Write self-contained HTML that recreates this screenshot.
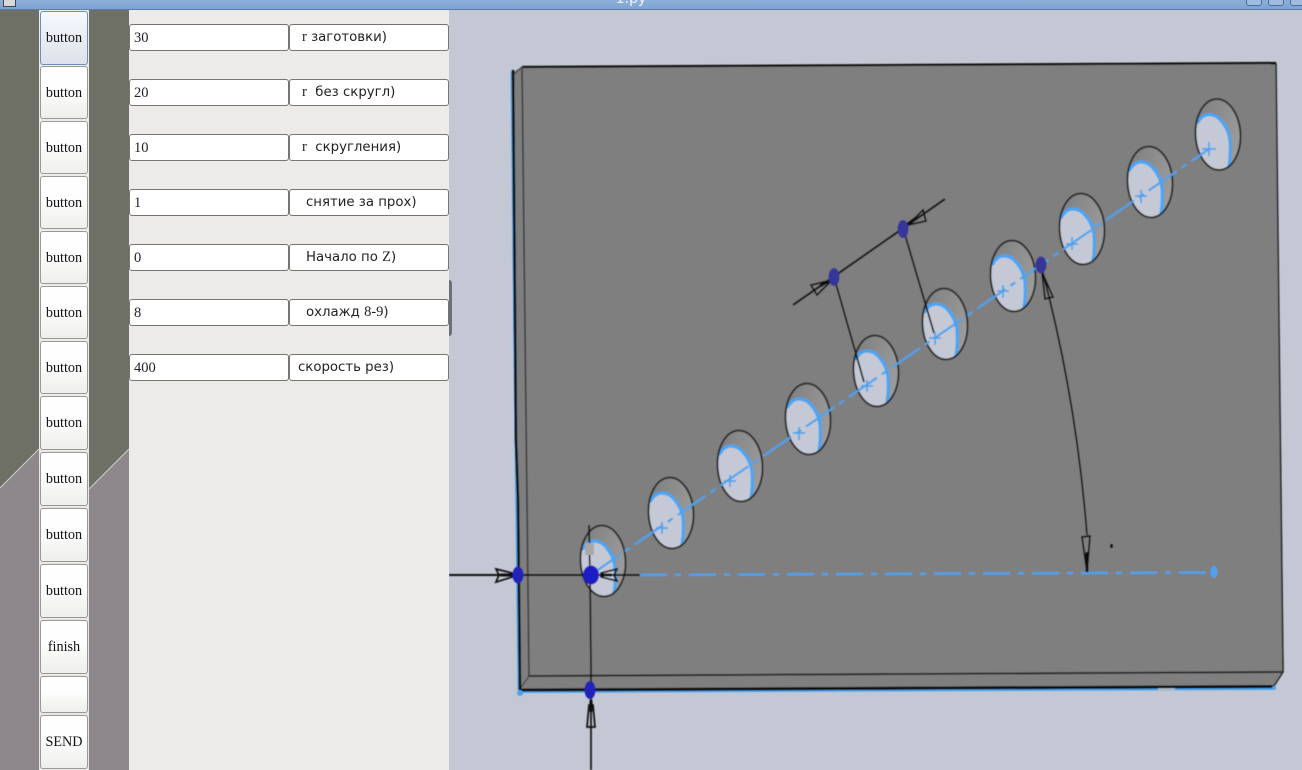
<!DOCTYPE html>
<html><head><meta charset="utf-8"><style>
html,body{margin:0;padding:0}
body{width:1302px;height:770px;overflow:hidden;position:relative;background:#c4c8d4;font-family:"Liberation Serif",serif;color:#111}
div{box-sizing:border-box;position:absolute}
.bar{left:0;top:0;width:1302px;height:10px;background:linear-gradient(#8db0da,#7da3d2);border-bottom:1px solid #5c7ba8;overflow:hidden}
.t{left:0;width:1262px;top:-9px;text-align:center;color:#eef3fa;font:14px "DejaVu Sans",sans-serif}
.wb{top:-6px;width:16px;height:12px;border:1px solid #4f6d99;border-radius:3px;background:#9dbce0}
.st{left:39px;top:10px;width:50px;height:760px;background:#ecebe9}
.p{left:129px;top:10px;width:320px;height:760px;background:#ecebe9}
.b{left:40px;width:48px;border:1px solid #9b9996;border-radius:3px;background:linear-gradient(#fff 0,#fdfdfd 45%,#eeeeec 100%);font-size:14.2px;color:#111;text-align:center}
.b span{position:absolute;left:0;right:0;top:50%;transform:translateY(-50%);line-height:16px}
.f{height:27px;background:#fff;border:1px solid #78746f;border-radius:3px;white-space:pre}
.i{left:129px;width:160px;padding-left:4px;font-size:14.5px;color:#222;line-height:26px}
.l{left:289px;width:160px;font:13.3px/25px "DejaVu Sans",sans-serif;color:#222}
.l i{font:14.5px/25px "Liberation Serif",serif}
</style></head><body>
<svg style="position:absolute;left:0;top:0" width="1302" height="770" viewBox="0 0 1302 770">
<defs>
<linearGradient id="hg" x1="0" y1="0" x2="1" y2="0.6"><stop offset="0" stop-color="#7c7c7c"/><stop offset="1" stop-color="#9c9c9c"/></linearGradient>
<clipPath id="hc"><ellipse cx="0" cy="0" rx="22.5" ry="35.5" transform="rotate(-3)"/></clipPath>
<filter id="sf" x="-5%" y="-5%" width="110%" height="110%"><feGaussianBlur stdDeviation="0.45"/></filter>
<g id="h">
<ellipse cx="0" cy="0" rx="22.5" ry="35.5" transform="rotate(-3)" fill="url(#hg)"/>
<g clip-path="url(#hc)"><path d="M-25,-11L-21,-11Q-16,-20 -9,-20Q-2,-20 3,-14Q11,-5 12,6Q13,20 11,37L-25,37Z" fill="#c5c9d5"/></g>
<path d="M-21,-11Q-16,-20 -9,-20Q-2,-20 3,-14Q11,-5 12,6Q13,20 11,32" fill="none" stroke="#4aa5f5" stroke-width="3.2"/>
<ellipse cx="0" cy="0" rx="22.5" ry="35.5" transform="rotate(-3)" fill="none" stroke="#2a2a2a" stroke-width="1.9"/>
</g>
</defs>
<rect x="0" y="0" width="129" height="770" fill="#6e7066"/>
<path d="M0,488L39,449V770H0Z" fill="#8d888c"/><path d="M89,489L129,449V770H89Z" fill="#8d888c"/>
<path d="M0,488L39,449M89,489L129,449" stroke="#cfcfca" stroke-width="1"/>
<rect x="449" y="10" width="853" height="760" fill="#c4c8d4"/>
<g filter="url(#sf)">
<path d="M522,67L1276,63L1284,670L1274,687L519,691L513,72Z" fill="#7f7f7f"/>
<path d="M522,67L1276,63" stroke="#111" stroke-width="2.2" fill="none"/>
<path d="M1276,63L1283,672L1274,686" stroke="#222" stroke-width="1.5" fill="none"/>
<path d="M522,67L529,676" stroke="#3c3c3c" stroke-width="1.6" fill="none"/>
<path d="M529,676L1283,672" stroke="#222" stroke-width="1.8" fill="none"/>
<path d="M522,67L514,74M529,676L520,689" stroke="#444" stroke-width="1.2" fill="none"/>
<path d="M512,72L515,350L519,690" stroke="#4ca3f0" stroke-width="3" fill="none"/>
<path d="M513,70L516,440L518,500L520,690" stroke="#0c0c0c" stroke-width="2.6" fill="none"/>
<path d="M520,692L1273,689" stroke="#4ca3f0" stroke-width="2" fill="none"/>
<path d="M520,690L1274,686.5" stroke="#0c0c0c" stroke-width="3" fill="none"/>
<path d="M1158,689L1175,689" stroke="#c9c9c9" stroke-width="1.6"/>
<circle cx="520" cy="693" r="3" fill="#4ca3f0"/><circle cx="1274" cy="688" r="2" fill="#4ca3f0"/>
<use href="#h" x="1218" y="134.5"/><use href="#h" x="1150" y="182"/><use href="#h" x="1082" y="229"/><use href="#h" x="1013" y="276"/><use href="#h" x="945" y="324"/><use href="#h" x="876" y="371"/><use href="#h" x="808" y="419"/><use href="#h" x="740" y="466"/><use href="#h" x="671" y="513"/><use href="#h" x="603" y="561"/>
<path d="M592,574L1209,149" stroke="#4ca3f0" stroke-width="2.2" stroke-dasharray="34 6 6 6" fill="none"/>
<g stroke="#4ca3f0" stroke-width="1.7"><path d="M1209,142V156M1202,149H1216M1141,190V203M1135,196H1147M1072,237V250M1066,244H1078M1003,285V298M997,291H1009M935,332V345M929,338H941M867,380V392M861,386H873M799,427V440M793,433H805M730,475V487M724,481H736M662,522V534M656,528H668"/></g>
<path d="M640,575L1210,572.5" stroke="#4ca3f0" stroke-width="2.4" stroke-dasharray="27 8 6 8" fill="none"/>
<ellipse cx="1214" cy="572" rx="3.5" ry="6" fill="#4ca3f0"/>
<path d="M449,575L640,575" stroke="#0c0c0c" stroke-width="2" fill="none"/>
<path d="M589,525L590,575L591,668L591,770" stroke="#111" stroke-width="1.7" fill="none"/>
<rect x="585" y="543" width="9" height="12" fill="#a8a8a8"/>
<g fill="none" stroke="#0c0c0c" stroke-width="1.7">
<path d="M496,569L512,573V577L496,582L499,575Z"/>
<path d="M617,569L601,573V577L617,581L614,575Z"/>
<path d="M587,727L589,705H593L595,727Z"/>
<path d="M832,280L811,285L817,295Z"/>
<path d="M908,225L923,210L926,221Z"/>
<path d="M1042,272L1053,297L1045,299Z"/>
<path d="M1082,537L1090,536L1087,572Z"/>
</g>
<path d="M500,575H514M600,575H612M591,700V712M905,226L916,218M820,286L832,279" stroke="#0c0c0c" stroke-width="3" fill="none"/>
<path d="M793,305L945,199" stroke="#111" stroke-width="2" fill="none"/>
<path d="M834,277L864,382M903,228L934,333" stroke="#111" stroke-width="1.7" fill="none"/>
<path d="M1043,273C1058,330 1078,420 1087,535" stroke="#111" stroke-width="1.7" fill="none"/>
<path d="M1087,552V572" stroke="#0c0c0c" stroke-width="3"/>
<rect x="1110" y="544" width="3" height="4" fill="#111"/>
<ellipse cx="518" cy="575" rx="5.5" ry="8.5" fill="#2020b8"/>
<ellipse cx="591" cy="575" rx="8" ry="9.5" fill="#1c1cc4"/>
<ellipse cx="590" cy="690" rx="5.5" ry="9" fill="#2020b8"/>
<ellipse cx="834" cy="277" rx="5.5" ry="9" fill="#35359a"/>
<ellipse cx="903" cy="229" rx="5.5" ry="9" fill="#35359a"/>
<ellipse cx="1041" cy="265" rx="5.5" ry="8.5" fill="#35359a"/>
</g>
</svg>
<div class="bar">
<div class="t">1.py</div>
<div class="wb" style="left:1246px"></div><div class="wb" style="left:1268px"></div><div class="wb" style="left:1290px;width:20px"></div>
<div style="left:3px;top:-5px;width:13px;height:12px;background:#d8d8d8;border:1px solid #444"></div>
</div>
<div class="st"></div>
<div class="st" style="left:39px;top:449px;height:321px;background:#e8e7e5"></div>
<div class="p"></div>
<div style="left:449px;top:280px;width:3px;height:56px;background:#6d7078;border-radius:0 3px 3px 0"></div>

<div class="b" style="top:11px;height:54px;border-color:#6a8fbd;background:linear-gradient(#f6f9fe,#dde1e9)"><span>button</span></div>
<div class="b" style="top:66px;height:53px"><span>button</span></div>
<div class="b" style="top:121px;height:53px"><span>button</span></div>
<div class="b" style="top:176px;height:53px"><span>button</span></div>
<div class="b" style="top:231px;height:53px"><span>button</span></div>
<div class="b" style="top:286px;height:53px"><span>button</span></div>
<div class="b" style="top:341px;height:53px"><span>button</span></div>
<div class="b" style="top:396px;height:54px"><span>button</span></div>
<div class="b" style="top:452px;height:54px"><span>button</span></div>
<div class="b" style="top:508px;height:54px"><span>button</span></div>
<div class="b" style="top:564px;height:54px"><span>button</span></div>
<div class="b" style="top:620px;height:54px"><span>finish</span></div>
<div class="b" style="top:676px;height:37px"></div>
<div class="b" style="top:715px;height:54px"><span>SEND</span></div>

<div class="f i" style="top:24px">30</div><div class="f l" style="top:24px;padding-left:12px"><i>r</i> заготовки)</div>
<div class="f i" style="top:79px">20</div><div class="f l" style="top:79px;padding-left:12px"><i>r</i>  без скругл)</div>
<div class="f i" style="top:134px">10</div><div class="f l" style="top:134px;padding-left:12px"><i>r</i>  скругления)</div>
<div class="f i" style="top:189px">1</div><div class="f l" style="top:189px;padding-left:16px">снятие за прох)</div>
<div class="f i" style="top:244px">0</div><div class="f l" style="top:244px;padding-left:16px">Начало по <i>Z</i>)</div>
<div class="f i" style="top:299px">8</div><div class="f l" style="top:299px;padding-left:16px">охлажд <i>8-9</i>)</div>
<div class="f i" style="top:354px">400</div><div class="f l" style="top:354px;padding-left:8px">скорость рез)</div>
</body></html>
